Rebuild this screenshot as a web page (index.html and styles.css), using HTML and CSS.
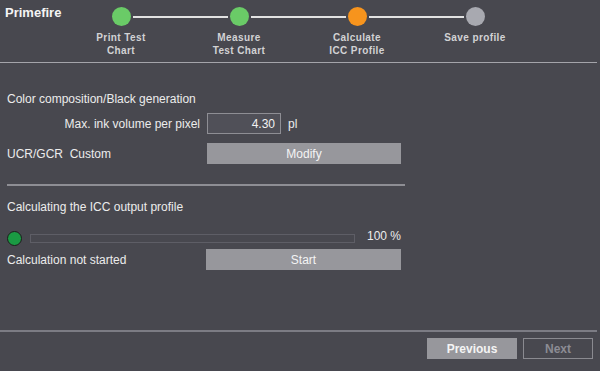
FILE: index.html
```html
<!DOCTYPE html>
<html lang="en">
<head>
  <meta charset="UTF-8">
  <meta name="viewport" content="width=device-width, initial-scale=1.0">
  <title>Primefire - Calculate ICC Profile</title>
  <link rel="stylesheet" href="styles.css">
</head>
<body>
  <div class="page">
    <div class="header">
      <h1>Primefire</h1>
      <div class="steps">
        <div class="step done">
          <span class="dot"></span>
          <span class="label">Print Test<br>Chart</span>
        </div>
        <div class="step done">
          <span class="dot"></span>
          <span class="label">Measure<br>Test Chart</span>
        </div>
        <div class="step active">
          <span class="dot"></span>
          <span class="label">Calculate<br>ICC Profile</span>
        </div>
        <div class="step">
          <span class="dot"></span>
          <span class="label">Save profile</span>
        </div>
      </div>
    </div>

    <div class="content">
      <div class="section-title">Color composition/Black generation</div>
      <div class="row">
        <label class="label-right" for="ink">Max. ink volume per pixel</label>
        <div class="field">
          <input id="ink" type="text" value="4.30">
          <span class="unit">pl</span>
        </div>
      </div>
      <div class="row modify-row">
        <span>UCR/GCR&nbsp; Custom</span>
        <button class="btn">Modify</button>
      </div>

      <hr class="divider">

      <div class="section-title">Calculating the ICC output profile</div>
      <div class="progress-row">
        <span class="status-dot"></span>
        <div class="progress"><div class="bar" style="width: 0%"></div></div>
        <span class="percent">100 %</span>
      </div>
      <div class="row start-row">
        <span>Calculation not started</span>
        <button class="btn">Start</button>
      </div>
    </div>

    <div class="footer">
      <button class="nav-btn">Previous</button>
      <button class="nav-btn disabled">Next</button>
    </div>
  </div>
</body>
</html>
```

FILE: styles.css
```css
body {
  margin: 0;
  background: #48484f;
  color: #ececec;
  font-family: "Liberation Sans", Arial, sans-serif;
  font-size: 12px;
}
.page {
  height: 371px;
  display: flex;
  flex-direction: column;
}
.header {
  display: flex;
  height: 62px;
  border-bottom: 1px solid #a4a4aa;
  margin-right: 3px;
}
h1 {
  margin: 0;
  padding: 5px 0 0 5px;
  width: 57px;
  font-size: 13px;
  font-weight: bold;
  color: #f4f4f4;
  line-height: 16px;
}
.steps {
  display: flex;
  padding-top: 7px;
}
.step {
  position: relative;
  width: 118px;
  display: flex;
  flex-direction: column;
  align-items: center;
}
.step .dot {
  width: 19px;
  height: 19px;
  border-radius: 50%;
  background: #6acb67;
}
.step.active .dot {
  background: #f7941d;
}
.step:last-child .dot {
  background: #a8a9b0;
}
/* linje til neste steg */
.step::after {
  content: "";
  position: absolute;
  top: 9px;
  left: 71px;
  width: 95px;
  height: 2px;
  background: #e2e2e2;
}
.step:last-child::after {
  display: none;
}
.step .label {
  margin-top: 5px;
  font-size: 10px;
  font-weight: bold;
  letter-spacing: 0.4px;
  line-height: 13px;
  text-align: center;
  color: #d2d2d4;
}
.content {
  width: 398px;
  padding-left: 7px;
}
.section-title {
  line-height: 16px;
  margin-top: 28px;
}
.row {
  display: grid;
  grid-template-columns: 193px 1fr;
  align-items: center;
  margin-top: 6px;
}
.label-right {
  text-align: right;
}
.field {
  display: flex;
  align-items: center;
  padding-left: 7px;
}
input {
  box-sizing: border-box;
  width: 74px;
  height: 21px;
  padding: 0 5px 0 0;
  border: 1px solid #8e8e94;
  background: #505058;
  color: #f2f2f2;
  font-family: inherit;
  font-size: 12px;
  text-align: right;
}
.unit {
  margin-left: 7px;
}
.btn {
  margin-left: 7px;
  width: 194px;
  height: 21px;
  border: none;
  background: #97979c;
  color: #f4f4f4;
  font-family: inherit;
  font-size: 12px;
}
.modify-row {
  margin-top: 9px;
}
.divider {
  margin: 20px 0 0;
  border: none;
  height: 2px;
  background: #8e8e94;
}
.content .divider + .section-title {
  margin-top: 13px;
}
.progress-row {
  display: flex;
  align-items: center;
  margin-top: 16px;
  height: 15px;
}
.status-dot {
  width: 13px;
  height: 13px;
  border: 1px solid #1c1c1c;
  border-radius: 50%;
  background: #1a9a43;
}
.progress {
  margin-left: 8px;
  width: 323px;
  height: 7px;
  border: 1px solid #5e5e66;
}
.bar {
  height: 100%;
  background: #1a9a43;
}
.percent {
  margin-left: 12px;
  margin-top: -6px;
}
.start-row {
  margin-top: 3px;
}
.start-row .btn {
  margin-left: 6px;
  width: 195px;
}
.footer {
  margin-top: auto;
  margin-bottom: 12px;
  margin-right: 3px;
  border-top: 2px solid #7c7c84;
  display: flex;
  justify-content: flex-end;
  gap: 6px;
  padding: 6px 4px 0 0;
}
.nav-btn {
  height: 21px;
  width: 90px;
  border: 1px solid #97979c;
  background: #97979c;
  color: #f4f4f4;
  font-family: inherit;
  font-size: 12px;
  font-weight: bold;
}
.nav-btn.disabled {
  width: 70px;
  background: transparent;
  border-color: #8a8a90;
  color: #8c8c94;
}
```
